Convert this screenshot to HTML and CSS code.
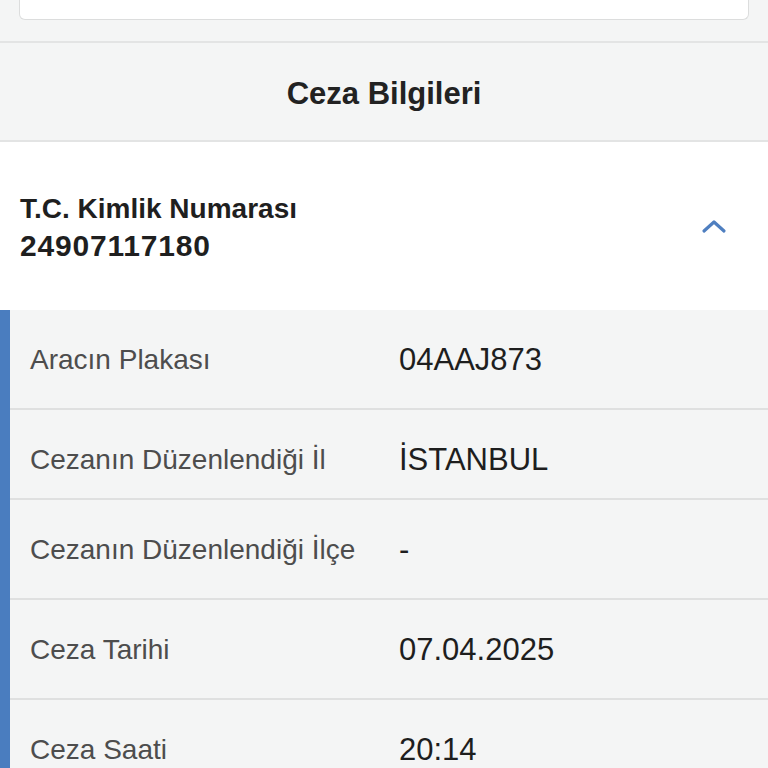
FILE: index.html
```html
<!DOCTYPE html>
<html lang="tr">

<head>
	<meta charset="UTF-8">
	<meta name="viewport" content="width=device-width, initial-scale=1.0">
	<link rel="stylesheet" href="styles.css">
	<title>Ceza Bilgileri</title>
</head>

<body>
	<div class="top-card"></div>

	<div class="section-title">Ceza Bilgileri</div>

	<div class="owner">
		<div class="owner-text">
			<div>T.C. Kimlik Numarası</div>
			<div class="owner-id">24907117180</div>
		</div>
		<svg class="chevron" width="26" height="16" viewBox="0 0 26 16">
			<path d="M3 13 L13 4 L23 13" fill="none" stroke="#4f7fc0" stroke-width="3.2" stroke-linecap="round" stroke-linejoin="round" />
		</svg>
	</div>

	<div class="details">
		<div class="row">
			<div class="label">Aracın Plakası</div>
			<div class="value">04AAJ873</div>
		</div>
		<div class="row row-tight">
			<div class="label">Cezanın Düzenlendiği İl</div>
			<div class="value">İSTANBUL</div>
		</div>
		<div class="row">
			<div class="label">Cezanın Düzenlendiği İlçe</div>
			<div class="value">-</div>
		</div>
		<div class="row">
			<div class="label">Ceza Tarihi</div>
			<div class="value">07.04.2025</div>
		</div>
		<div class="row">
			<div class="label">Ceza Saati</div>
			<div class="value">20:14</div>
		</div>
	</div>
</body>

</html>
```

FILE: styles.css
```css
* {
	box-sizing: border-box;
}

body {
	margin: 0;
	background: #f4f5f5;
	font-family: "Liberation Sans", Arial, sans-serif;
	color: #222;
}

.top-card {
	height: 20px;
	margin: 0 19px;
	background: #fff;
	border: 1px solid #dcdddd;
	border-top: none;
	border-radius: 0 0 6px 6px;
}

.section-title {
	margin-top: 21px;
	height: 101px;
	padding-top: 4px;
	border-top: 2px solid #e3e4e4;
	border-bottom: 2px solid #e3e4e4;
	display: flex;
	align-items: center;
	justify-content: center;
	font-size: 31px;
	font-weight: bold;
	color: #222;
}

.owner {
	height: 168px;
	background: #fff;
	display: flex;
	align-items: center;
	justify-content: space-between;
	padding: 0 41px 0 20px;
}

.owner-text {
	font-size: 28px;
	font-weight: bold;
	line-height: 37px;
	color: #1f1f1f;
	padding-top: 2px;
}

.owner-id {
	font-size: 30px;
	letter-spacing: 0.8px;
}

.chevron {
	display: block;
}

.details {
	border-left: 10px solid #4a7dbf;
}

.row {
	display: grid;
	grid-template-columns: 369px 1fr;
	align-items: center;
	padding: 35px 20px 33px 20px;
	border-bottom: 2px solid #dfe0e0;
	line-height: 30px;
}

.row-tight {
	padding-bottom: 23px;
}

.label {
	font-size: 28px;
	color: #4d4d4d;
}

.value {
	font-size: 31px;
	color: #1e1e1e;
}
```
